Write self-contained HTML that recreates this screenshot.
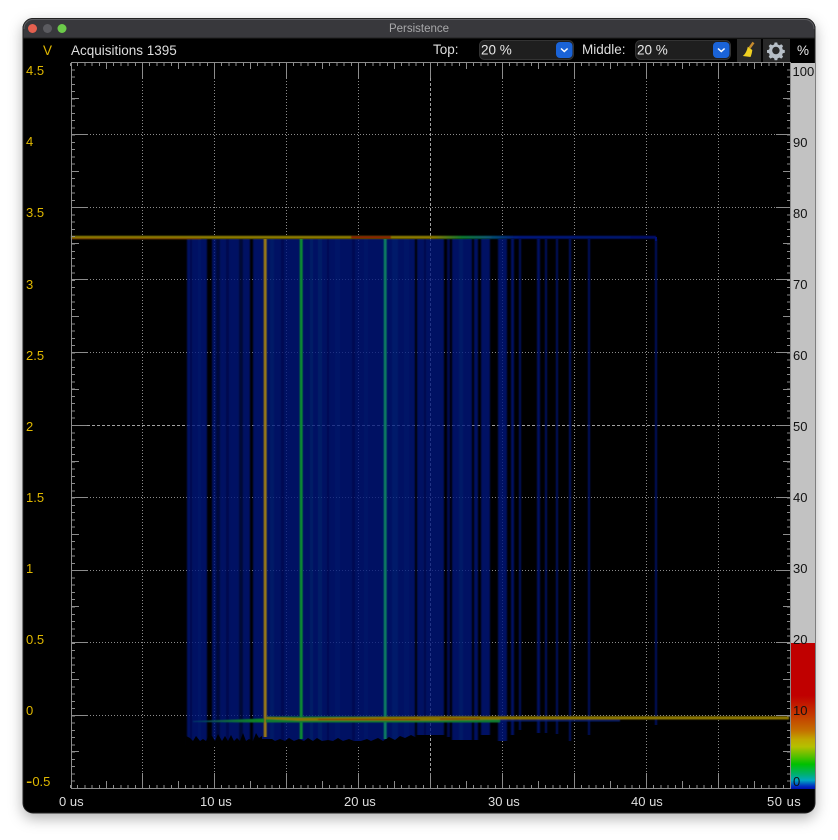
<!DOCTYPE html>
<html>
<head>
<meta charset="utf-8">
<title>Persistence</title>
<style>
html,body{margin:0;padding:0;background:#fff;width:838px;height:840px;overflow:hidden}
svg{display:block;font-family:"Liberation Sans",sans-serif}
text{font-size:13px}
.t{font-size:13.5px}
</style>
</head>
<body>
<svg width="838" height="840" viewBox="0 0 838 840" xmlns="http://www.w3.org/2000/svg">
<defs>
<filter id="sh" x="-10%" y="-10%" width="120%" height="120%"><feDropShadow dx="0" dy="5" stdDeviation="7" flood-color="#000" flood-opacity=".3"/></filter>
<filter id="bx" x="-2%" y="-1%" width="104%" height="102%"><feGaussianBlur stdDeviation="0.9 0"/></filter>
<filter id="bl" x="-2%" y="-1%" width="104%" height="102%"><feGaussianBlur stdDeviation="0.6 0"/></filter>
<filter id="by" x="-2%" y="-60%" width="104%" height="220%"><feGaussianBlur stdDeviation="0.5"/></filter>
<linearGradient id="cb" x1="0" y1="0" x2="0" y2="1">
<stop offset="0" stop-color="#c00000"/><stop offset=".36" stop-color="#c00000"/><stop offset=".5" stop-color="#c43c00"/>
<stop offset=".6" stop-color="#c47000"/><stop offset=".66" stop-color="#c0a800"/><stop offset=".71" stop-color="#b4c000"/>
<stop offset=".78" stop-color="#50c000"/><stop offset=".83" stop-color="#00c000"/><stop offset=".9" stop-color="#00b070"/>
<stop offset=".94" stop-color="#00a8c0"/><stop offset=".98" stop-color="#0030c0"/><stop offset="1" stop-color="#0010b0"/>
</linearGradient>
<linearGradient id="topband" x1="0" y1="0" x2="1" y2="0">
<stop offset="0" stop-color="#8a7a00"/><stop offset=".62" stop-color="#8a7a00"/><stop offset=".67" stop-color="#0a7a30"/>
<stop offset=".71" stop-color="#085a70"/><stop offset=".76" stop-color="#001a80"/><stop offset="1" stop-color="#00106a"/>
</linearGradient>
<linearGradient id="lowband" x1="0" y1="0" x2="1" y2="0">
<stop offset="0" stop-color="#04386a"/><stop offset=".5" stop-color="#0a6a40"/><stop offset="1" stop-color="#0a8a20"/>
</linearGradient>
</defs>

<!-- window -->
<rect x="23" y="18.500" width="792" height="794.500" rx="10" fill="#000" stroke="#222" filter="url(#sh)"/>
<path d="M23 38V28.500a10 10 0 0 1 10-10H805a10 10 0 0 1 10 10V38Z" fill="#38383c" stroke="#222"/>
<path d="M24 29a9 9 0 0 1 9-9.500H805a9 9 0 0 1 9 9.500" fill="none" stroke="#5e5e62"/>
<circle cx="32.500" cy="28.500" r="4.500" fill="#e5604f"/>
<circle cx="47.500" cy="28.500" r="4.500" fill="#5b5b60"/>
<circle cx="62" cy="28.500" r="4.500" fill="#6ccb4a"/>
<text x="419" y="32" text-anchor="middle" fill="#a8a8aa" style="font-size:11.500px">Persistence</text>

<!-- toolbar -->
<text x="43" y="55" fill="#e0b800" class="t">V</text>
<text x="71" y="55" fill="#dedede" class="t">Acquisitions 1395</text>
<text x="433" y="54" fill="#dedede" class="t">Top:</text>
<rect x="479.500" y="40.500" width="94" height="19" rx="5" fill="#1f1f1f" stroke="#333"/>
<text x="481" y="54.500" fill="#e8e8e8" class="t">20 %</text>
<rect x="556" y="42" width="16.500" height="16" rx="4" fill="#1a63d8"/>
<path d="M561 48.500l3.300 3 3.300-3" fill="none" stroke="#fff" stroke-width="1.500"/>
<text x="582" y="54" fill="#dedede" class="t">Middle:</text>
<rect x="635.500" y="40.500" width="95" height="19" rx="5" fill="#1f1f1f" stroke="#333"/>
<text x="637" y="54.500" fill="#e8e8e8" class="t">20 %</text>
<rect x="713" y="42" width="16.500" height="16" rx="4" fill="#1a63d8"/>
<path d="M718 48.500l3.300 3 3.300-3" fill="none" stroke="#fff" stroke-width="1.500"/>
<rect x="737" y="39" width="24" height="23" fill="#282828"/>
<rect x="763" y="39" width="27" height="23" fill="#282828"/>
<path d="M753.500 42.500L749.500 48" stroke="#c58a2e" stroke-width="2.400" fill="none"/>
<path d="M747.800 46.800L752.300 50C752 52.500 751.500 55 750.500 57L742.800 56C745.500 54 747 50.500 747.800 46.800Z" fill="#efd021"/>
<path d="M774.600 42.500h2.600l.5 2 1.800.7 1.800-1 1.800 1.800-1 1.800.7 1.800 2 .5v2.600l-2 .5-.7 1.800 1 1.800-1.800 1.800-1.800-1-1.800.7-.5 2h-2.600l-.5-2-1.800-.7-1.800 1-1.800-1.800 1-1.800-.7-1.800-2-.5v-2.600l2-.5.7-1.800-1-1.800 1.800-1.800 1.800 1 1.800-.7z" fill="#b6bec6"/>
<circle cx="775.900" cy="50.500" r="3.700" fill="#282828"/>
<text x="797" y="55" fill="#e8e8e8" class="t">%</text>

<!-- grid -->
<g shape-rendering="crispEdges" fill="none">
<g stroke="#8c8c8c" stroke-dasharray="1 2">
<path d="M142.500 78V773M214.500 78V773M286.500 78V773M358.500 78V773M502.500 78V773M574.500 78V773M646.500 78V773M718.500 78V773"/>
<path d="M87 134.500H776M87 207.500H776M87 279.500H776M87 352.500H776M87 497.500H776M87 570.500H776M87 642.500H776M87 715.500H776"/>
</g>
<g stroke="#a0a0a0" stroke-dasharray="3 2">
<path d="M430.500 78V773"/><path d="M87 425.500H776"/>
</g>
</g>

<!-- persistence bars -->
<g opacity=".78" filter="url(#bx)">
<rect x="187" y="239" width="20" height="506" fill="#00127f"/>
<rect x="190" y="239" width="2" height="506" fill="#000c60"/>
<rect x="198" y="239" width="3" height="506" fill="#001a84"/>
<rect x="212" y="239" width="4" height="506" fill="#00127f"/>
<rect x="216" y="239" width="4" height="506" fill="#000a4c"/>
<rect x="220" y="239" width="19" height="506" fill="#00127f"/>
<rect x="226" y="239" width="3" height="506" fill="#000d64"/>
<rect x="239" y="239" width="4" height="506" fill="#000a44"/>
<rect x="243" y="239" width="7" height="506" fill="#00127f"/>
<rect x="253" y="239" width="128" height="506" fill="#00127f"/>
<rect x="270" y="239" width="4" height="506" fill="#002084"/>
<rect x="281" y="239" width="3" height="506" fill="#000e68"/>
<rect x="310" y="239" width="3" height="506" fill="#002684"/>
<rect x="318" y="239" width="4" height="506" fill="#002684"/>
<rect x="327" y="239" width="2" height="506" fill="#000e68"/>
<rect x="335" y="239" width="5" height="506" fill="#001e84"/>
<rect x="352" y="239" width="3" height="506" fill="#000e68"/>
<rect x="364" y="239" width="4" height="506" fill="#001a84"/>
<rect x="381" y="239" width="34" height="506" fill="#00127f"/>
<rect x="392" y="239" width="6" height="506" fill="#002488"/>
<rect x="404" y="239" width="5" height="506" fill="#001c84"/>
<rect x="417" y="239" width="27" height="496" fill="#00127f"/>
<rect x="424" y="239" width="2" height="496" fill="#000d60"/>
<rect x="447" y="239" width="3" height="498" fill="#000e68"/>
<rect x="452" y="239" width="20" height="501" fill="#00127f"/>
<rect x="459" y="239" width="4" height="501" fill="#002084"/>
<rect x="474" y="239" width="4" height="501" fill="#00127f"/>
<rect x="481" y="239" width="9" height="496" fill="#00127f"/>
<rect x="498" y="239" width="9" height="502" fill="#00127f"/>
<rect x="511" y="239" width="3" height="496" fill="#001280"/>
<rect x="519" y="239" width="2" height="491" fill="#001280"/>
<rect x="537" y="239" width="3" height="494" fill="#001280"/>
<rect x="545" y="239" width="2" height="494" fill="#001280"/>
<rect x="556" y="239" width="2" height="495" fill="#001280"/>
<rect x="569" y="239" width="2" height="502" fill="#001280"/>
<rect x="588" y="239" width="2" height="496" fill="#001280"/>
<rect x="655" y="239" width="2" height="486" fill="#001280"/>
</g>
<polygon points="186,736 190,738 193,741 196,736 200,741 203,739 206,741 209,735 212,736 215,741 218,734 222,741 225,736 228,741 231,735 234,741 237,738 240,741 243,733 246,741 249,739 253,741 256,733 259,738 262,736 262,746 186,746" fill="#000"/>
<polygon points="262,739 272,739 275,741 280,739 285,741 289,738 294,741 299,739 304,741 308,738 313,741 317,738 322,741 328,740 333,741 338,738 343,741 349,739 354,741 361,741 367,739 371,741 378,738 383,741 389,737 395,740 400,736 405,738 411,735 417,738 417,746 262,746" fill="#000"/>

<!-- bright vertical lines -->
<g filter="url(#bl)">
<rect x="263.700" y="239" width="3" height="498" fill="#9a7812"/>
<rect x="299.700" y="239" width="3" height="500" fill="#0a8a30"/>
<rect x="383.700" y="239" width="3" height="500" fill="#0a7a62"/>
</g>

<!-- top band -->
<g filter="url(#by)">
<rect x="71" y="235.800" width="585" height="3" fill="url(#topband)"/>
<rect x="71" y="238" width="130" height="1.200" fill="#8a4a00"/>
<rect x="351" y="236.200" width="40" height="2" fill="#8a0a00"/>
</g>
<rect x="655" y="237" width="2" height="4" fill="#001078" shape-rendering="crispEdges"/>

<!-- lower band -->
<g filter="url(#by)">
<path d="M193 721L264 718.500V722.500L193 722Z" fill="url(#lowband)"/>
<path d="M266 716.500H500V722.500H266Z" fill="#0a7a30"/>
<rect x="500" y="720" width="120" height="1.500" fill="#001a70"/>
<path d="M266 717L300 718L430 716.200H789V719.500H500L430 720.600H300L266 719Z" fill="#8a7400"/>
<path d="M318 719.500H420M440 719H480" stroke="#8a2a00" stroke-width="1" fill="none"/>
</g>

<!-- axes + ticks -->
<g shape-rendering="crispEdges" fill="none" stroke="#8c8c8c">
<path d="M71.500 62V789M71 788.500H791M71 62.500H791M790.500 62V789"/>
<path d="M70 64.500H790" stroke-width="3" stroke-dasharray="1 6.200"/>
<path d="M70 786.500H790" stroke-width="3" stroke-dasharray="1 6.200"/>
<path d="M106.500 63V69M178.500 63V69M250.500 63V69M322.500 63V69M394.500 63V69M466.500 63V69M538.500 63V69M610.500 63V69M682.500 63V69M754.500 63V69"/>
<path d="M106.500 788V781M178.500 788V781M250.500 788V781M322.500 788V781M394.500 788V781M466.500 788V781M538.500 788V781M610.500 788V781M682.500 788V781M754.500 788V781"/>
<path d="M142.500 63V78M214.500 63V78M286.500 63V78M358.500 63V78M430.500 63V78M502.500 63V78M574.500 63V78M646.500 63V78M718.500 63V78"/>
<path d="M142.500 788V773M214.500 788V773M286.500 788V773M358.500 788V773M430.500 788V773M502.500 788V773M574.500 788V773M646.500 788V773M718.500 788V773"/>
<path d="M73.500 62V788" stroke-width="3" stroke-dasharray="1 6.260"/>
<path d="M788.500 62V788" stroke-width="3" stroke-dasharray="1 6.260"/>
<path d="M72 98.500H79M72 171.500H79M72 243.500H79M72 316.500H79M72 389.500H79M72 461.500H79M72 534.500H79M72 606.500H79M72 679.500H79M72 751.500H79"/>
<path d="M790 98.500H783M790 171.500H783M790 243.500H783M790 316.500H783M790 389.500H783M790 461.500H783M790 534.500H783M790 606.500H783M790 679.500H783M790 751.500H783"/>
<path d="M72 134.500H87M72 207.500H87M72 279.500H87M72 352.500H87M72 425.500H87M72 497.500H87M72 570.500H87M72 642.500H87M72 715.500H87"/>
<path d="M790 134.500H776M790 207.500H776M790 279.500H776M790 352.500H776M790 425.500H776M790 497.500H776M790 570.500H776M790 642.500H776M790 715.500H776"/>
</g>

<!-- colour bar -->
<rect x="791" y="63" width="24" height="580" fill="#c2c2c2"/>
<rect x="791" y="643" width="24" height="146" fill="url(#cb)"/>

<!-- y labels -->
<g fill="#e0b800">
<text x="26" y="75">4.5</text><text x="26" y="146">4</text><text x="26" y="217">3.5</text>
<text x="26" y="289">3</text><text x="26" y="360">2.5</text><text x="26" y="431">2</text>
<text x="26" y="502">1.5</text><text x="26" y="573">1</text><text x="26" y="644">0.5</text>
<text x="26" y="715">0</text><text x="26" y="786"><tspan dy="1.500" style="font-size:19px">-</tspan><tspan dy="-1.500">0.5</tspan></text>
</g>
<!-- right labels -->
<g fill="#111">
<text x="792.500" y="76">100</text><text x="793" y="147">90</text><text x="793" y="218">80</text>
<text x="793" y="289">70</text><text x="793" y="360">60</text><text x="793" y="431">50</text>
<text x="793" y="502">40</text><text x="793" y="573">30</text><text x="793" y="644">20</text>
<text x="793" y="715">10</text><text x="793" y="786">0</text>
</g>
<!-- x labels -->
<g fill="#dedede">
<text x="59" y="806">0 us</text><text x="200" y="806">10 us</text><text x="344" y="806">20 us</text>
<text x="488" y="806">30 us</text><text x="631" y="806">40 us</text><text x="767" y="806" style="letter-spacing:.5px">50 us</text>
</g>
</svg>
</body>
</html>
